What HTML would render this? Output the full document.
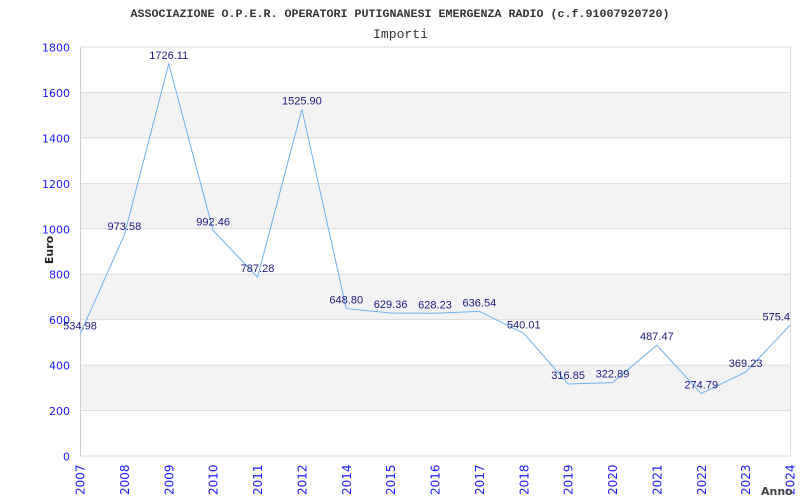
<!DOCTYPE html>
<html><head><meta charset="utf-8"><style>html,body{margin:0;padding:0;background:#fff;width:800px;height:500px;overflow:hidden}</style></head>
<body>
<svg id="s" width="800" height="500" xmlns="http://www.w3.org/2000/svg" font-family="Liberation Sans, DejaVu Sans, sans-serif">
<text x="400" y="17" text-anchor="middle" font-family="Liberation Mono, monospace" font-weight="bold" font-size="11" fill="#333" textLength="539" lengthAdjust="spacingAndGlyphs">ASSOCIAZIONE O.P.E.R. OPERATORI PUTIGNANESI EMERGENZA RADIO (c.f.91007920720)</text>
<text x="400.5" y="38" text-anchor="middle" font-family="Liberation Mono, monospace" font-size="13" fill="#333" textLength="55" lengthAdjust="spacingAndGlyphs">Importi</text>
<g id="g"></g>
<text transform="translate(53,250) rotate(-90)" text-anchor="middle" font-family="DejaVu Sans, sans-serif" font-weight="bold" font-size="11" fill="#222">Euro</text>
<text x="761" y="495" font-family="DejaVu Sans, sans-serif" font-weight="bold" font-size="11" fill="#444">Anno</text>
</svg>
<script>
var g=document.getElementById('g'),h='';
function Y(v){return 456-v*409/1800;}
for(var k=0;k<9;k++){var y1=Y((k+1)*200),y0=Y(k*200);
 if(k%2==1)h+='<rect x="80" y="'+y1+'" width="710" height="'+(y0-y1)+'" fill="#f3f3f3"/>';}
for(var k=0;k<=9;k++){var y=Y(k*200);h+='<line x1="80" x2="790" y1="'+y+'" y2="'+y+'" stroke="#ddd"/>';
 h+='<text x="70" y="'+(y+4.5)+'" text-anchor="end" font-family="DejaVu Sans, sans-serif" font-size="11" fill="#1a1aff">'+(k*200)+'</text>';}
h+='<line x1="80.5" x2="80.5" y1="47" y2="456" stroke="#ccc"/><line x1="790.5" x2="790.5" y1="47" y2="456" stroke="#ddd"/>';
var yrs=[2007,2008,2009,2010,2011,2012,2014,2015,2016,2017,2018,2019,2020,2021,2022,2023,2024];
var v=[534.98,973.58,1726.11,992.46,787.28,1525.90,648.80,629.36,628.23,636.54,540.01,316.85,322.89,487.47,274.79,369.23,575.4];
var pts=[];
for(var i=0;i<17;i++){var x=80+i*44.375,y=Y(v[i]);pts.push(x+','+y);
 h+='<text transform="translate('+(x+4.5)+',495) rotate(-90)" font-family="DejaVu Sans, sans-serif" font-size="12" fill="#1a1aff">'+yrs[i]+'</text>';}
h+='<polyline points="'+pts.join(' ')+'" fill="none" stroke="#6fb0f0" stroke-width="1"/>';
for(var i=0;i<17;i++){var x=80+i*44.375,y=Y(v[i]);var t=v[i].toFixed(2);if(i==16)t='575.4';
 h+='<text x="'+x+'" y="'+(y-5)+'" text-anchor="'+(i==16?'end':'middle')+'" font-size="11" fill="#1a1a80">'+t+'</text>';}
g.innerHTML=h;
</script>
</body></html>
